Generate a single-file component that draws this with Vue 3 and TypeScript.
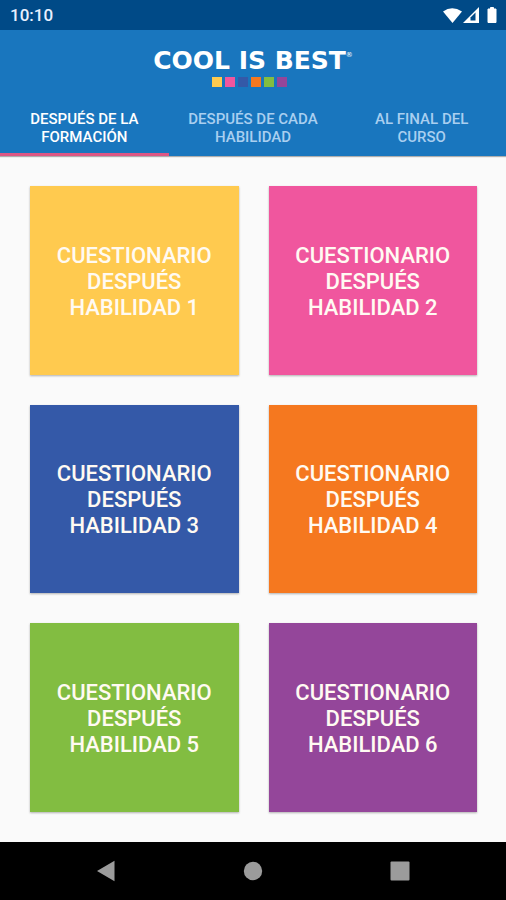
<script setup lang="ts">
import { ref } from 'vue'

interface Card {
  id: number
  tone: string
}

const tabs: string[] = ['Después de la formación', 'Después de cada habilidad', 'Al final del curso']
const activeTab = ref<number>(0)

const cards: Card[] = [
  { id: 1, tone: 'yellow' },
  { id: 2, tone: 'pink' },
  { id: 3, tone: 'blue' },
  { id: 4, tone: 'orange' },
  { id: 5, tone: 'green' },
  { id: 6, tone: 'purple' },
]
</script>

<template>
  <div class="screen">
    <div class="status">
      <span>10:10</span>
      <svg class="status-icons" width="56" height="18" viewBox="0 0 56 18" aria-hidden="true">
        <path d="M1 5.500 Q10 -1 20 5.500 L10.500 17 Z" fill="#fff" />
        <path d="M21 17 L37 1 V17 Z" fill="#fff" />
        <path d="M28.500 14.500 V11.500 L33.500 6.500 V14.500 Z" fill="#004a87" />
        <path d="M46 3 H48.500 V1.500 H51.500 V3 H54 V16.500 H46 Z" fill="#fff" stroke="#fff" stroke-linejoin="round" />
      </svg>
    </div>

    <header class="header">
      <div class="brand">
        <h1 class="wordmark">COOL IS BEST<sup>®</sup></h1>
        <div class="swatches">
          <span v-for="card in cards" :key="card.id" class="swatch" :class="card.tone"></span>
        </div>
      </div>
      <div class="tabs" role="tablist">
        <button
          v-for="(tab, index) in tabs"
          :key="tab"
          class="tab"
          :class="{ active: index === activeTab }"
          type="button"
          role="tab"
          :aria-selected="index === activeTab"
          @click="activeTab = index"
        >
          {{ tab }}
        </button>
      </div>
    </header>

    <main class="grid">
      <button v-for="card in cards" :key="card.id" class="card" :class="card.tone" type="button">
        Cuestionario después habilidad {{ card.id }}
      </button>
    </main>

    <nav class="system-nav">
      <button type="button" aria-label="Atrás">
        <svg width="22" height="22" viewBox="0 0 22 22"><path d="M2 11 L19.500 0.800 V21.200 Z" /></svg>
      </button>
      <button type="button" aria-label="Inicio">
        <svg width="22" height="22" viewBox="0 0 22 22"><circle cx="11" cy="11" r="9.200" /></svg>
      </button>
      <button type="button" aria-label="Recientes">
        <svg width="22" height="22" viewBox="0 0 22 22"><rect x="1.500" y="1.500" width="19" height="19" rx="1" /></svg>
      </button>
    </nav>
  </div>
</template>

<style>
body {
  margin: 0;
}
</style>

<style scoped>
.screen {
  min-height: 100vh;
  display: flex;
  flex-direction: column;
  background: #fafafa;
  font-family: Roboto, "Liberation Sans", sans-serif;
}

button {
  border: 0;
  margin: 0;
  font-family: inherit;
  cursor: pointer;
}

.status {
  display: flex;
  align-items: center;
  justify-content: space-between;
  height: 30px;
  padding: 0 8px 0 10px;
  background: #004a87;
  color: #e8f0ff;
  font-size: 17px;
  font-weight: 500;
}

.header {
  background: #1976be;
  box-shadow: 0 1px 1px rgba(0, 0, 0, 0.3);
}

.brand {
  display: flex;
  flex-direction: column;
  align-items: center;
  gap: 2px;
  padding-top: 16px;
}

.wordmark {
  margin: 0;
  color: #fff;
  font-family: "DejaVu Sans", Verdana, sans-serif;
  font-size: 25px;
  font-weight: 700;
  line-height: 29px;
}

.wordmark sup {
  font-size: 7px;
  font-weight: 400;
  line-height: 8px;
  vertical-align: 12px;
}

.swatches {
  display: flex;
  gap: 3px;
  padding-right: 8px;
}

.swatch {
  width: 10px;
  height: 10px;
}

.tabs {
  display: grid;
  grid-template-columns: repeat(3, 1fr);
  margin-top: 12px;
}

.tab {
  height: 57px;
  padding: 4px 16px 0;
  border-bottom: 3px solid transparent;
  background: none;
  color: #a9cff0;
  font-size: 15px;
  font-weight: 500;
  line-height: 18px;
  text-transform: uppercase;
}

.tab.active {
  border-bottom-color: #dd5785;
  color: #fff;
}

.grid {
  flex: 1;
  display: grid;
  grid-template-columns: repeat(2, 1fr);
  grid-auto-rows: 1fr;
  gap: 30px;
  padding: 30px 29px 30px 30px;
}

.card {
  min-height: 160px;
  padding: 3px 24px 0;
  color: #fffaf2;
  font-size: 22px;
  font-weight: 500;
  line-height: 26px;
  text-transform: uppercase;
  box-shadow: 0 1px 2px rgba(0, 0, 0, 0.3);
}

.yellow {
  background: #ffca4f;
}

.pink {
  background: #f0569e;
}

.blue {
  background: #3459a8;
}

.orange {
  background: #f5781f;
}

.green {
  background: #82bd41;
}

.purple {
  background: #94469a;
}

.system-nav {
  display: flex;
  align-items: center;
  justify-content: space-between;
  height: 58px;
  padding: 0 95px;
  background: #000;
}

.system-nav button {
  display: flex;
  padding: 0;
  background: none;
}

.system-nav svg {
  fill: #9b9b9b;
}
</style>
